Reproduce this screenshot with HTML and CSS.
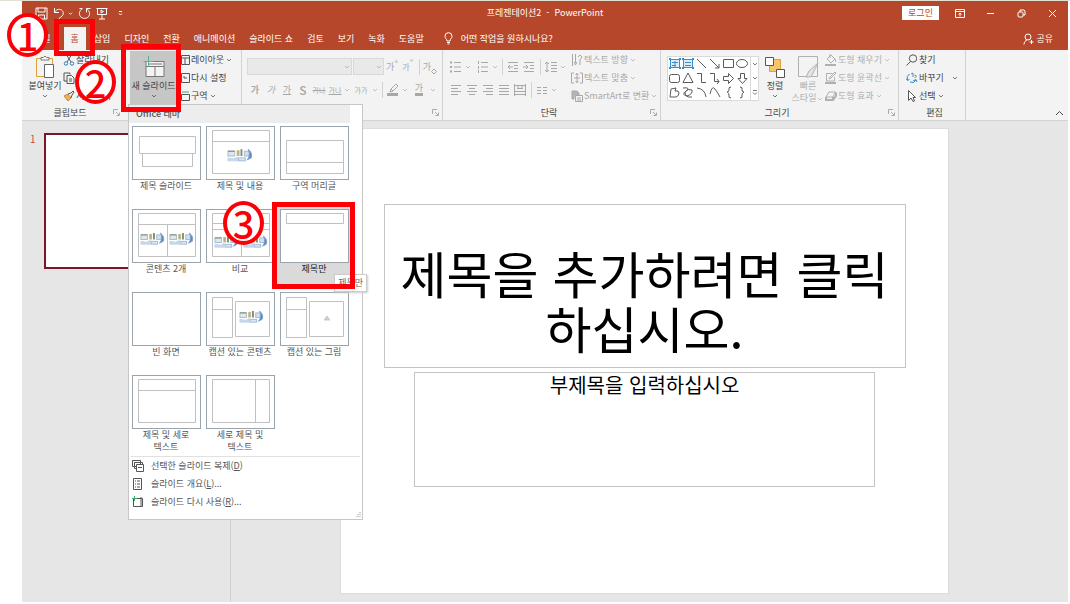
FILE: index.html
```
<!DOCTYPE html>
<html lang="ko">
<head>
<meta charset="utf-8">
<meta name="viewport" content="width=device-width, initial-scale=1">
<title>프레젠테이션2 - PowerPoint</title>
<link rel="stylesheet" href="styles.css">
</head>
<body>
<svg class="sprite" aria-hidden="true">
  <symbol id="chev" viewBox="0 0 6 6"><path d="M1 2l2 2 2-2"/></symbol>
  <symbol id="launch" viewBox="0 0 7 7"><path d="M.5 5V.5H5M3 3l3 3M6.500 3.500v3h-3"/></symbol>
  <symbol id="media" viewBox="0 0 28 16">
    <rect x="1" y="3" width="7" height="5" fill="#dfe7ef" stroke="#a9b9c9"/><path d="M1 3h7" stroke="#6b8a6b"/>
    <rect x="10.500" y="2.500" width="2" height="5" fill="#b9a77a" stroke="#c5b890"/><rect x="14.500" y="1.500" width="1" height="6" fill="#59705a" stroke="#7c917d"/>
    <rect x="18" y="3" width="5" height="5" fill="#cfe0ee" stroke="#a9b9c9"/>
    <path d="M22 1q5 4 3 9l-4 2q4-5 1-11z" fill="#5b87bd" stroke="#7fa3cf"/>
    <path d="M1 10l6 1 4-2v4H1z" fill="#c3d6ea" stroke="#c3d6ea"/><rect x="12" y="10" width="7" height="3" fill="#dbe6f2" stroke="#9fb9d6"/>
  </symbol>
</svg>

<div class="app">
  <header class="titlebar">
    <div class="quick">
      <button type="button" aria-label="저장"><svg width="13" height="13" viewBox="0 0 13 13"><path d="M1 1h11v11H1zM3 1v4h7V1M3.500 12V8h6v4M5 12v-2"/></svg></button>
      <button type="button" aria-label="실행 취소"><svg width="12" height="13" viewBox="0 0 12 13"><path d="M1.500 1v4.500H6M1.500 5.500C3 2.500 6 1.500 8.500 3c2.500 2 2 4.500.5 6l-3.500 3"/></svg></button>
      <span class="dot"><svg width="5" height="5" viewBox="0 0 6 6"><use href="#chev"/></svg></span>
      <button type="button" aria-label="다시 실행"><svg width="13" height="13" viewBox="0 0 13 13"><path d="M4 2C1.500 3.500.5 7 2.500 9.500c2 2.500 6 2.500 8 0C12.500 7 11.500 3.500 8.500 2M8.500 5.500V1.500h4M1.500 1.500h3"/></svg></button>
      <button type="button" aria-label="슬라이드 쇼 시작"><svg width="12" height="13" viewBox="0 0 12 13"><path d="M.5 1.500h11M1.500 1.500v6h9v-6M6 7.500V12M3 12h6M5 3l2.500 1.500L5 6z"/></svg></button>
      <button type="button" aria-label="빠른 실행 도구 모음"><svg width="6" height="8" viewBox="0 0 6 8"><path d="M2 2.500h3M2 4.500l1.500 1.500L5 4.500"/></svg></button>
    </div>
    <h1 class="doc-name">프레젠테이션2&nbsp; -&nbsp; PowerPoint</h1>
    <div class="window">
      <button type="button" class="login">로그인</button>
      <button type="button" aria-label="리본 표시 옵션"><svg width="10" height="9" viewBox="0 0 10 9"><path d="M.5.5h9v8h-9zM.5 2.500h9M5 7.500v-3M3.500 5.500L5 4l1.500 1.500"/></svg></button>
      <button type="button" aria-label="최소화"><svg width="9" height="9" viewBox="0 0 9 9"><path d="M1 4.500h7"/></svg></button>
      <button type="button" aria-label="이전 크기로 복원"><svg width="9" height="9" viewBox="0 0 9 9"><rect x="1" y="3" width="5" height="5" rx="1"/><path d="M3 3V1h4l1 1v4H6"/></svg></button>
      <button type="button" aria-label="닫기"><svg width="9" height="9" viewBox="0 0 9 9"><path d="M1 1l7 7M8 1L1 8"/></svg></button>
    </div>
  </header>

  <nav class="tabs">
    <button type="button" class="tab">파일</button>
    <button type="button" class="tab active">홈</button>
    <button type="button" class="tab">삽입</button>
    <button type="button" class="tab">디자인</button>
    <button type="button" class="tab">전환</button>
    <button type="button" class="tab">애니메이션</button>
    <button type="button" class="tab">슬라이드 쇼</button>
    <button type="button" class="tab">검토</button>
    <button type="button" class="tab">보기</button>
    <button type="button" class="tab">녹화</button>
    <button type="button" class="tab">도움말</button>
    <button type="button" class="tab tell"><svg width="9" height="13" viewBox="0 0 9 13"><path d="M3 9C3 7 1 6.500 1 4.200a3.500 3.500 0 0 1 7 0C8 6.500 6 7 6 9zM3 10.500h3M3.500 12h2"/></svg>어떤 작업을 원하시나요?</button>
    <button type="button" class="tab share"><svg width="11" height="12" viewBox="0 0 11 12"><circle cx="5" cy="4" r="3"/><path d="M1 11.500C1 9 2.500 7.500 4 7M8.500 7v4M6.500 9h4"/></svg>공유</button>
  </nav>

  <div class="ribbon">
    <section class="group clipboard" aria-label="클립보드">
      <div class="tools">
        <button type="button" class="big paste">
          <svg width="20" height="24" viewBox="0 0 20 24"><path d="M6 3.500H1.500v18H9M14 3.500h3.500V9" stroke="#e0a040"/><path d="M6 5V2.500h2.500L10 1l1.500 1.500H14V5z" stroke="#777" fill="#fff"/><path d="M9.500 9.500h9v13h-9z" stroke="#666" fill="#fff"/></svg>
          붙여넣기<svg class="c" width="6" height="6"><use href="#chev"/></svg></button>
        <div class="stack">
          <button type="button"><svg width="12" height="12" viewBox="0 0 12 12"><path d="M3 0l5 8M9 0L4 8" stroke="#555"/><circle cx="3" cy="9.500" r="1.700" stroke="#2f7fb8"/><circle cx="9" cy="9.500" r="1.700" stroke="#2f7fb8"/></svg>잘라내기</button>
          <button type="button"><svg width="12" height="12" viewBox="0 0 12 12"><path d="M7 2.500V1H1v8h3M4 3.500h4.500L11 6v5.500H4zM6 7h3M6 9h3" stroke="#555"/></svg>복사</button>
          <button type="button"><svg width="12" height="12" viewBox="0 0 12 12"><path d="M1 6l4-2 3 4-3 3z" fill="#eeb060" stroke="#c98932"/><path d="M5 4l3-1 2-2 1 1-2 3-1 3" stroke="#555"/></svg>서식 복사</button>
        </div>
      </div>
      <div class="caption"><span>클립보드</span><button type="button" class="launch" aria-label="클립보드 옵션"><svg width="7" height="7"><use href="#launch"/></svg></button></div>
    </section>

    <section class="group slides" aria-label="슬라이드">
      <div class="tools">
        <button type="button" class="big pressed" aria-expanded="true">
          <svg width="22" height="24" viewBox="0 0 22 24"><path d="M3 6.500h18v15H3z" fill="#f3f3f3" stroke="#777"/><path d="M3 11.500h18M12 11.500v10M5 9h14" stroke="#777"/><path d="M5.500 1v11M.5 6.500h10" stroke="#5fb487"/></svg>
          새 슬라이드<svg class="c" width="6" height="6"><use href="#chev"/></svg></button>
        <div class="stack">
          <button type="button"><svg width="9" height="10" viewBox="0 0 9 10"><path d="M.5.5h8v9h-8zM1 3h7M4 3v6" stroke="#555"/></svg>레이아웃<svg class="c" width="8" height="6" viewBox="0 0 6 6"><use href="#chev"/></svg></button>
          <button type="button"><svg width="9" height="10" viewBox="0 0 9 10"><path d="M.5.5h8v9h-8zM3 5h3M3 3v2" stroke="#555"/></svg>다시 설정</button>
          <button type="button"><svg width="9" height="10" viewBox="0 0 9 10"><path d="M.5 3.500h8v6h-8z" stroke="#555"/><path d="M1 1h7" stroke="#3fa66b"/></svg>구역<svg class="c" width="8" height="6" viewBox="0 0 6 6"><use href="#chev"/></svg></button>
        </div>
      </div>
    </section>

    <section class="group font off" aria-label="글꼴">
      <div class="tools rows">
        <div class="row">
          <span class="combo wide"><select aria-label="글꼴" disabled><option></option></select><svg class="c" width="6" height="6"><use href="#chev"/></svg></span>
          <span class="combo"><select aria-label="글꼴 크기" disabled><option></option></select><svg class="c" width="6" height="6"><use href="#chev"/></svg></span>
          <button type="button" class="ib" disabled>가<sup>^</sup></button>
          <button type="button" class="ib small" disabled>가<sup>ˇ</sup></button>
          <i class="sep"></i>
          <button type="button" class="ib eraser" aria-label="서식 지우기" disabled>가<svg width="6" height="8" viewBox="0 0 6 8"><path d="M3 2l2.500 2.500L3 7 .5 4.500z"/></svg></button>
        </div>
        <div class="row">
          <button type="button" class="ib" disabled><b>가</b></button>
          <button type="button" class="ib" disabled><em>가</em></button>
          <button type="button" class="ib" disabled><u>가</u></button>
          <button type="button" class="ib shadow" disabled>S</button>
          <button type="button" class="ib tiny" disabled><s>가나</s></button>
          <button type="button" class="ib tiny" disabled><u>가나</u></button>
          <svg class="c" width="8" height="6" viewBox="0 0 6 6"><use href="#chev"/></svg>
          <button type="button" class="ib mid tiny" disabled>가가</button>
          <svg class="c" width="8" height="6" viewBox="0 0 6 6"><use href="#chev"/></svg>
          <i class="sep"></i>
          <button type="button" class="ib" aria-label="형광펜" disabled><svg width="12" height="13" viewBox="0 0 12 13"><path d="M3 9l1-3 5-5 2 2-5 5zM4 6l2 2"/><path d="M0 11.500h11" stroke-width="3"/></svg></button>
          <svg class="c" width="8" height="6" viewBox="0 0 6 6"><use href="#chev"/></svg>
          <button type="button" class="ib mid" disabled><span class="bar">가</span></button>
          <svg class="c" width="8" height="6" viewBox="0 0 6 6"><use href="#chev"/></svg>
        </div>
      </div>
      <div class="caption"><span></span><button type="button" class="launch" aria-label="글꼴 옵션"><svg width="7" height="7"><use href="#launch"/></svg></button></div>
    </section>

    <section class="group paragraph off" aria-label="단락">
      <div class="tools">
        <div class="rows">
          <div class="row">
            <button type="button" class="ib" aria-label="글머리 기호" disabled><svg width="12" height="12" viewBox="0 0 12 12"><path d="M0 1.500h2M0 6h2M0 10.500h2" stroke-width="2"/><path d="M4 1.500h7M4 6h7M4 10.500h7"/></svg></button>
            <svg class="c" width="8" height="6" viewBox="0 0 6 6"><use href="#chev"/></svg>
            <button type="button" class="ib after" aria-label="번호 매기기" disabled><svg width="12" height="12" viewBox="0 0 12 12"><path d="M1.500 0v3M1.500 5v3M1.500 9v3M4 1.500h7M4 6h7M4 10.500h7"/></svg></button>
            <svg class="c" width="8" height="6" viewBox="0 0 6 6"><use href="#chev"/></svg>
            <i class="sep"></i>
            <button type="button" class="ib" aria-label="내어쓰기" disabled><svg width="12" height="12" viewBox="0 0 12 12"><path d="M1 1.500h10M7 4.500h4M7 7.500h4M1 10.500h10M6 6H1M3 4L1 6l2 2"/></svg></button>
            <button type="button" class="ib" aria-label="들여쓰기" disabled><svg width="12" height="12" viewBox="0 0 12 12"><path d="M1 1.500h10M7 4.500h4M7 7.500h4M1 10.500h10M0 6h5M3 4l2 2-2 2"/></svg></button>
            <i class="sep"></i>
            <button type="button" class="ib" aria-label="줄 간격" disabled><svg width="12" height="12" viewBox="0 0 12 12"><path d="M2 1v10M0 3l2-2 2 2M0 9l2 2 2-2M6 1.500h6M6 4.500h6M6 7.500h6M6 10.500h6"/></svg></button>
            <svg class="c" width="8" height="6" viewBox="0 0 6 6"><use href="#chev"/></svg>
          </div>
          <div class="row">
            <button type="button" class="ib" aria-label="왼쪽 맞춤" disabled><svg width="12" height="12" viewBox="0 0 12 12"><path d="M1 1.500h10M1 4.500h7M1 7.500h10M1 10.500h7"/></svg></button>
            <button type="button" class="ib" aria-label="가운데 맞춤" disabled><svg width="12" height="12" viewBox="0 0 12 12"><path d="M1 1.500h10M3 4.500h6M1 7.500h10M3 10.500h6"/></svg></button>
            <button type="button" class="ib" aria-label="오른쪽 맞춤" disabled><svg width="12" height="12" viewBox="0 0 12 12"><path d="M1 1.500h10M4 4.500h7M1 7.500h10M4 10.500h7"/></svg></button>
            <button type="button" class="ib" aria-label="양쪽 맞춤" disabled><svg width="12" height="12" viewBox="0 0 12 12"><path d="M1 1.500h10M1 4.500h10M1 7.500h10M1 10.500h10"/></svg></button>
            <button type="button" class="ib" aria-label="균등 분할" disabled><svg width="12" height="12" viewBox="0 0 12 12"><path d="M.5 0v12M11.500 0v12M1 1.500h10M3 4.500h6M1 7.500h10M1 10.500h10M4 1v3M8 1v3"/></svg></button>
            <i class="sep"></i>
            <button type="button" class="ib" aria-label="열" disabled><svg width="10" height="8" viewBox="0 0 10 8"><path d="M0 1.500h4M0 4.500h4M0 7.500h4M6 1.500h4M6 4.500h4M6 7.500h4"/></svg></button>
            <svg class="c" width="8" height="6" viewBox="0 0 6 6"><use href="#chev"/></svg>
          </div>
        </div>
        <div class="stack">
          <button type="button" disabled><svg width="12" height="12" viewBox="0 0 12 12"><path d="M1.500 0v12M4.500 0v9M3 8l1.500 3L6 8M7 3l2-2 2 2-2 3M9 6v5"/></svg>텍스트 방향<svg class="c" width="8" height="6" viewBox="0 0 6 6"><use href="#chev"/></svg></button>
          <button type="button" disabled><svg width="12" height="12" viewBox="0 0 12 12"><path d="M3 1H.5v10H3M9 1h2.500v10H9M3 6h6M6 1v10M4.500 3L6 1.500 7.500 3M4.500 9L6 10.500 7.500 9"/></svg>텍스트 맞춤<svg class="c" width="8" height="6" viewBox="0 0 6 6"><use href="#chev"/></svg></button>
          <button type="button" disabled><svg width="12" height="12" viewBox="0 0 12 12"><path d="M1 1h5l2 2v2H3v4H1z" fill="#b5b5b5"/><path d="M4.500 5.500h7v6h-7zM6 8h4M6 10h4" fill="#f3f3f3"/></svg>SmartArt로 변환<svg class="c" width="8" height="6" viewBox="0 0 6 6"><use href="#chev"/></svg></button>
        </div>
      </div>
      <div class="caption"><span>단락</span><button type="button" class="launch" aria-label="단락 옵션"><svg width="7" height="7"><use href="#launch"/></svg></button></div>
    </section>

    <section class="group drawing" aria-label="그리기">
      <div class="tools">
        <div class="gallery">
          <svg width="82" height="43" viewBox="0 0 82 43" role="img" aria-label="도형">
            <g stroke="#3b8fc9"><path d="M2.500 2.500h9v8h-9zM15.500 2.500h9v8h-9z" fill="#dcecf8"/><path d="M1 2h2M11 2h2M1 11h2M11 11h2M14 2h2M24 2h2M14 11h2M24 11h2" stroke-width="2"/><path d="M4 5.500h6M4 8.500h4M7 4v6M17 5.500h6M17 8.500h6"/></g>
            <g stroke="#5a5a5a"><path d="M29 2l9 9M42 2l9 9M51 7v4h-4M55.500 2.500h10v8h-10z"/><ellipse cx="74" cy="6.500" rx="5.500" ry="4"/>
            <rect x="1.500" y="17.500" width="10" height="8" rx="2"/><path d="M20 16l5 9.500H15zM29 16.500h4.500v9H38M42 16.500h4.500v8H51M49 22l2 2.500-2 2.500M55.500 19.500h5v-3l5 5-5 5v-3h-5zM72.500 16.500h4v5h2.500l-4.500 5-4.500-5h2.500z"/>
            <path d="M2 40l1-8 5-1-1 3q4-1 4 2t-3 4zM15 31q8-1 3 3t1 5q6-2 5-6-4-2-7 2 0 6 7 5M29 31q8 1 9 9M42 37q2-9 5-5t5 8M63 30q-3 0-2 3 0 2-2 2 2 1 2 3-1 3 2 3M72 30q3 0 2 3 0 2 2 2-2 1-2 3 1 3-2 3"/></g>
          </svg>
          <div class="scroller"><svg class="c" width="6" height="6"><use href="#chev"/></svg><svg class="c" width="6" height="6"><use href="#chev"/></svg><svg class="c" width="6" height="7" viewBox="0 0 6 7"><path d="M1 1.500h4M1 3.500l2 2 2-2"/></svg></div>
        </div>
        <button type="button" class="big arrange">
          <svg width="20" height="24" viewBox="0 0 20 24"><path d="M4.500 4.500h11v12h-11z" fill="#f7c56b" stroke="#e0a040"/><path d="M.5 2.500h8v8h-8zM11.500 14.500h8v8h-8z" fill="#fff" stroke="#555"/></svg>
          정렬<svg class="c" width="6" height="6"><use href="#chev"/></svg></button>
        <button type="button" class="big quickstyle" disabled>
          <svg width="22" height="24" viewBox="0 0 22 24"><path d="M1.500 1.500h19v20h-19z"/><path d="M21 8l-9 8-3 6q6 1 7-4z" fill="#e4e4e4"/></svg>
          <span>빠른</span><span class="line">스타일<svg class="c" width="8" height="6" viewBox="0 0 6 6"><use href="#chev"/></svg></span></button>
        <div class="stack">
          <button type="button" disabled><svg width="12" height="12" viewBox="0 0 12 12"><path d="M2 5l4-4 4 4-4 4zM10 5l1 3M5 0v4"/><path d="M0 11h11" stroke-width="2"/></svg>도형 채우기<svg class="c" width="8" height="6" viewBox="0 0 6 6"><use href="#chev"/></svg></button>
          <button type="button" disabled><svg width="12" height="12" viewBox="0 0 12 12"><path d="M9.500 5v4h-8V1.500h6M4 7l1-2 5-5 1 1-5 5z"/><path d="M0 11h11" stroke-width="2"/></svg>도형 윤곽선<svg class="c" width="8" height="6" viewBox="0 0 6 6"><use href="#chev"/></svg></button>
          <button type="button" disabled><svg width="12" height="12" viewBox="0 0 12 12"><path d="M1 7l3-5h6.500L8 7z"/><path d="M1 7v3h7l3-4V2.500M8 7v3" stroke-width="2"/></svg>도형 효과<svg class="c" width="8" height="6" viewBox="0 0 6 6"><use href="#chev"/></svg></button>
        </div>
      </div>
      <div class="caption off"><span>그리기</span><button type="button" class="launch" aria-label="도형 서식"><svg width="7" height="7"><use href="#launch"/></svg></button></div>
    </section>

    <section class="group editing" aria-label="편집">
      <div class="tools">
        <div class="stack">
          <button type="button"><svg width="12" height="12" viewBox="0 0 12 12"><circle cx="7" cy="4.500" r="3.700" stroke="#555"/><path d="M4.500 7.500L.5 11.500" stroke="#555"/></svg>찾기</button>
          <button type="button"><svg width="12" height="12" viewBox="0 0 12 12"><path d="M3.500 2Q0 4 1.500 8M0 6.500L1.500 8.500l2-1M4 10q4 2 6-2M7 9l3-1.500L11 10" stroke="#2f8fc8"/><path d="M5 2l2-1v4M8.500 3l2 1-2 2" stroke="#5a8fb0"/></svg>바꾸기<svg class="c far" width="8" height="6" viewBox="0 0 6 6"><use href="#chev"/></svg></button>
          <button type="button"><svg width="12" height="12" viewBox="0 0 12 12"><path d="M2.500.5v10L5 8l2 3.500L8.500 11 7 7.500h2.500z" stroke="#555" fill="#fff"/></svg>선택<svg class="c" width="8" height="6" viewBox="0 0 6 6"><use href="#chev"/></svg></button>
        </div>
      </div>
      <div class="caption"><span>편집</span></div>
    </section>
    <button type="button" class="collapse" aria-label="리본 축소"><svg width="9" height="7" viewBox="0 0 9 7"><path d="M1 5l3.500-3.500L8 5"/></svg></button>
  </div>

  <main class="work">
    <aside class="panel"><span class="num">1</span><div class="mini"></div></aside>
    <div class="stage">
      <article class="slide">
        <h2 class="ph-title">제목을 추가하려면 클릭하십시오.</h2>
        <p class="ph-sub">부제목을 입력하십시오</p>
      </article>
    </div>
  </main>

  <div class="menu">
    <h3>Office 테마</h3>
    <div class="layouts">
      <button type="button" class="layout"><svg viewBox="0 0 69 54"><path d="M7.500 10.500h56v17h-56zM10.500 27.500h50v13h-50z"/></svg>제목 슬라이드</button>
      <button type="button" class="layout"><svg viewBox="0 0 69 54"><path d="M6.500 4.500h57v43h-57zM6.500 15.500h57"/><use href="#media" x="21" y="22" width="27" height="16"/></svg>제목 및 내용</button>
      <button type="button" class="layout"><svg viewBox="0 0 69 54"><path d="M6.500 14.500h57v33h-57zM6.500 36.500h57"/></svg>구역 머리글</button>
      <button type="button" class="layout"><svg viewBox="0 0 69 54"><path d="M6.500 4.500h57v43h-57zM6.500 15.500h57M35.500 15.500v32"/><use href="#media" x="8" y="23" width="26" height="15"/><use href="#media" x="37" y="23" width="26" height="15"/></svg>콘텐츠 2개</button>
      <button type="button" class="layout"><svg viewBox="0 0 69 54"><path d="M6.500 4.500h57v43h-57zM6.500 14.500h57M6.500 20.500h57M35.500 14.500v33"/><use href="#media" x="8" y="26" width="26" height="15"/><use href="#media" x="37" y="26" width="26" height="15"/></svg>비교</button>
      <button type="button" class="layout selected"><svg viewBox="0 0 69 54"><path d="M6.500 4.500h57v10h-57z"/></svg>제목만</button>
      <button type="button" class="layout"><svg viewBox="0 0 69 54"></svg>빈 화면</button>
      <button type="button" class="layout"><svg viewBox="0 0 69 54"><path d="M6.500 5.500h20v40h-20zM6.500 17.500h20M29.500 9.500h34v35h-34z"/><use href="#media" x="33" y="18" width="26" height="15"/></svg>캡션 있는 콘텐츠</button>
      <button type="button" class="layout"><svg viewBox="0 0 69 54"><path d="M6.500 5.500h20v40h-20zM6.500 17.500h20M29.500 9.500h34v35h-34z"/><path d="M44 28l3-4 3 4z" fill="#ccc" stroke="#ccc"/></svg>캡션 있는 그림</button>
      <button type="button" class="layout"><svg viewBox="0 0 69 54"><path d="M6.500 4.500h57v43h-57zM6.500 15.500h57"/></svg>제목 및 세로<br>텍스트</button>
      <button type="button" class="layout"><svg viewBox="0 0 69 54"><path d="M6.500 4.500h57v43h-57zM49.500 4.500v43"/></svg>세로 제목 및<br>텍스트</button>
    </div>
    <div class="commands">
      <button type="button"><svg width="12" height="12" viewBox="0 0 12 12"><path d="M.5.5h8v6h-8zM2.500 2.500h8v6h-8z"/><path d="M4.500 4.500h7v7h-7zM6 7.500h4" fill="#fff"/></svg><span>선택한 슬라이드 복제(<u>D</u>)</span></button>
      <button type="button"><svg width="12" height="12" viewBox="0 0 12 12"><path d="M1.500.5h8v11h-8zM3 3h1M5 3h3M3 6h1M5 6h3M3 9h1M5 9h3"/></svg><span>슬라이드 개요(<u>L</u>)...</span></button>
      <button type="button"><svg width="12" height="12" viewBox="0 0 12 12"><path d="M1.500 2.500h9v8h-9zM9 1v9"/><path d="M0 2.500h5M2.500 0v5" stroke="#3fa66b"/></svg><span>슬라이드 다시 사용(<u>R</u>)...</span></button>
    </div>
    <svg class="grip" width="5" height="5" viewBox="0 0 5 5"><path d="M4 0v1M4 2v1M4 4v1M2 2v1M2 4v1M0 4v1"/></svg>
    <div class="tooltip" role="tooltip">제목만</div>
  </div>
</div>

<div class="frame home"></div>
<div class="frame new"></div>
<div class="frame only"></div>
<div class="step one">1</div>
<div class="step two">2</div>
<div class="step three">3</div>
</body>
</html>
```
FILE: styles.css
```
* { box-sizing: border-box; }
body {
  margin: 0;
  min-height: 100vh;
  padding: 0 2px 2px 22px;
  border-top: 1px solid #e2e0d0;
  background: #fff;
  color: #444;
  font: 9px/12px "Noto Sans CJK KR", sans-serif;
  display: flex;
  flex-direction: column;
  position: relative;
}
button {
  margin: 0; padding: 0; border: 0;
  background: none; color: inherit;
  font: inherit; white-space: nowrap;
}
svg { fill: none; stroke: currentColor; flex: none; }
h1, h2, h3, p { margin: 0; font-weight: 400; font-size: inherit; }
.sprite { position: absolute; width: 0; height: 0; }
.app { flex: 1; display: flex; flex-direction: column; position: relative; background: #e6e6e6; }

.titlebar {
  height: 24px;
  display: grid;
  grid-template-columns: 1fr auto 1fr;
  align-items: center;
  background: #b7472a;
  color: #fff;
}
.quick { display: flex; align-items: center; padding-left: 10px; }
.quick button, .window button { display: grid; place-items: center; }
.quick button { width: 18px; height: 20px; }
.dot { width: 7px; display: flex; }
.window { display: flex; justify-content: flex-end; align-items: center; }
.window button { width: 31px; height: 20px; }
.window .login { width: 37px; height: 14px; margin-right: 5px; background: #fff; color: #b7472a; }

.tabs { height: 25px; display: flex; background: #b7472a; color: #fff; padding: 2px 8px 0 5px; }
.tab { padding: 0 7px; }
.tab.active { margin: 0 1px 0 6px; background: #f3f3f3; color: #b7472a; }
.tell, .share { display: flex; align-items: center; gap: 8px; }
.tab.tell { margin-left: 6px; }
.tab.share { margin-left: auto; gap: 2px; }

.ribbon {
  height: 71px;
  display: flex;
  background: #f3f3f3;
  border-bottom: 1px solid #d2d2d2;
  position: relative;
}
.group { display: flex; flex-direction: column; padding: 1px 0 0 5px; border-right: 1px solid #d2d2d2; flex: none; }
.tools { flex: 0 0 54px; display: flex; }
.clipboard { width: 101px; border: 0; }
.slides { width: 119px; }
.font { width: 201px; }
.paragraph { width: 218px; }
.drawing { width: 238px; }
.editing { width: 67px; }
.caption { height: 15px; display: flex; align-items: center; }
.caption span { flex: 1; text-align: center; }
.caption .launch { width: 10px; height: 8px; display: flex; }
.launch svg { stroke: #aaa; }
.off { color: #a8a8a8; }
.off .caption span, .caption.off span { color: #444; }
.drawing button:disabled { color: #b0b0b0; }
.c { opacity: .7; }

.big { display: flex; flex-direction: column; align-items: center; padding-top: 4px; }
.big > svg:first-child { margin-bottom: 1px; }
.big .c { margin-top: 1px; }
.big .line { display: flex; align-items: center; }
.paste { width: 36px; }
.pressed { width: 47px; margin: 0 4px 0 2px; background: #c6c6c6; }
.arrange { width: 32px; }
.quickstyle { width: 34px; }
.stack { display: grid; grid-template-rows: repeat(3, 18px); justify-items: start; }
.stack button { display: flex; align-items: center; gap: 1px; }
.paragraph .stack { margin-left: 4px; }
.editing .stack { padding-left: 2px; }
.far { margin-left: 6px; }
.rows { display: flex; flex-direction: column; padding-top: 7px; gap: 6px; }
.row { display: flex; align-items: center; height: 17px; }
.ib { width: 16px; height: 16px; display: flex; align-items: center; justify-content: center; }
.ib.mid { width: 20px; }
.ib.after { margin-left: 3px; }
.small { font-size: 8px; }
.tiny { font-size: 7px; }
.shadow { font-size: 12px; font-weight: 500; }
.ib sup { font-size: 7px; line-height: 7px; align-self: flex-start; }
.eraser svg { align-self: flex-end; }
.bar { border-bottom: 3px solid currentColor; line-height: 10px; }
.sep { width: 6px; height: 16px; background: linear-gradient(#d2d2d2, #d2d2d2) center / 1px 100% no-repeat; }
.combo { position: relative; width: 31px; height: 17px; margin-left: 1px; }
.combo.wide { width: 105px; margin-left: 0; }
.combo select { appearance: none; display: block; width: 100%; height: 100%; border: 1px solid #cfcfcf; background: #e6e6e6; border-radius: 0; padding: 0; }
.combo .c { position: absolute; right: 2px; top: 6px; }
.gallery { display: flex; margin: 5px 0 4px 1px; border: 1px solid #dadada; background: #fff; }
.scroller { width: 8px; display: flex; flex-direction: column; justify-content: space-around; align-items: center; border-left: 1px solid #dadada; }
.collapse { position: absolute; right: 4px; bottom: 1px; height: 9px; display: flex; }

.work { flex: 1; display: flex; }
.panel { width: 20%; border-right: 1px solid #cfcfcf; padding: 12px 9px 0 8px; display: flex; align-items: flex-start; }
.num { width: 14px; color: #d04a3a; font-size: 10px; }
.mini { flex: 1; aspect-ratio: 176 / 135; border: 2px solid #7c1526; background: #fff; }
.stage { flex: 1; display: flex; padding: 7px 10px 8px 0; }
.slide { width: 609px; max-width: 74%; margin: 0 auto; background: #fff; border: 1px solid #dcdcdc; padding-top: 75px; color: #000; display: flex; flex-direction: column; align-items: center; gap: 4px; }
.ph-title, .ph-sub { border: 1px solid #c4c4c4; text-align: center; }
.ph-title { width: 86%; height: 164px; padding: 0 10px 12px; display: flex; align-items: flex-end; justify-content: center; font-size: 50px; line-height: 55px; word-break: break-all; }
.ph-sub { width: 76%; height: 115px; font-size: 20px; line-height: 24px; }

.menu { position: absolute; left: 106px; top: 103px; width: 235px; background: #fff; border: 1px solid #c6c6c6; color: #555; }
.menu h3 { height: 18px; padding: 3px 7px 0; margin-right: 12px; background: #ededed; font-weight: 500; }
.layouts { display: grid; grid-template-columns: repeat(3, 74px); grid-auto-rows: 83px; }
.layout { display: flex; flex-direction: column; align-items: center; justify-content: flex-start; padding-top: 3px; }
.layout svg { width: 69px; height: 54px; background: #fff; outline: 1px solid #9aa4ad; outline-offset: -1px; stroke: #c0c0c0; }
.selected { background: #dadada; color: #222; }
.commands { border-top: 1px solid #e1e1e1; margin: 1px 2px 0; padding-bottom: 8px; }
.commands button { display: flex; align-items: center; gap: 7px; height: 18px; padding-left: 1px; width: 100%; }
.grip { position: absolute; right: 1px; bottom: 2px; opacity: .6; }
.tooltip { position: absolute; right: -5px; top: 169px; padding: 2px 3px; background: #fff; border: 1px solid #ccc; box-shadow: 1px 1px 2px #ccc; color: #666; }

.frame { position: absolute; border: 5px solid #fb0007; }
.home { left: 54px; top: 18px; width: 41px; height: 37px; }
.new { left: 121px; top: 43px; width: 60px; height: 68px; }
.only { left: 272px; top: 201px; width: 83px; height: 87px; }
.step {
  position: absolute;
  width: 41px; height: 44px;
  border: 4px solid #fb0007; border-radius: 50%;
  background: #fff; color: #fb0007;
  display: grid; place-items: center;
  font-size: 38px; font-weight: 500; line-height: 36px;
}
.one { left: 7px; top: 12px; }
.two { left: 75px; top: 59px; }
.three { left: 223px; top: 200px; }
```
